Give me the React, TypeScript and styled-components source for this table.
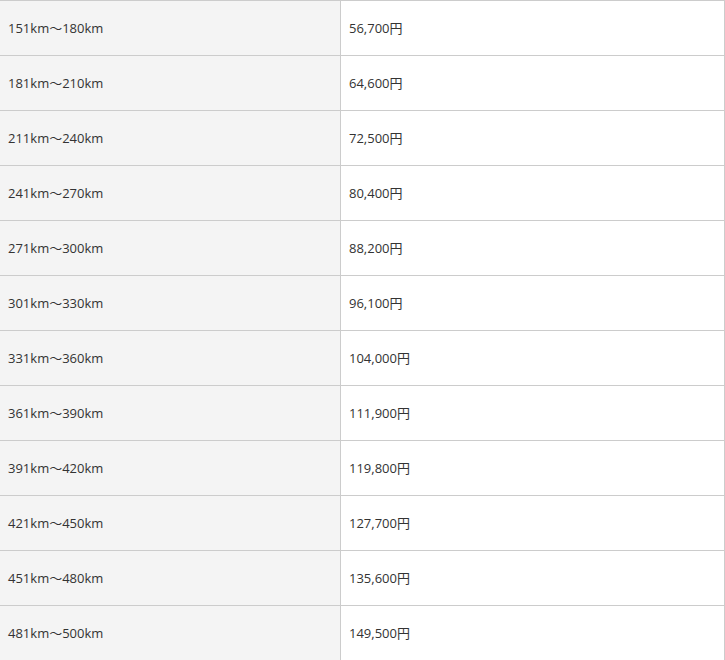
import React from "react";
import styled, { createGlobalStyle } from "styled-components";

const Global = createGlobalStyle`
  html, body { margin: 0; padding: 0; background: #fff; }
  body { font-family: "Open Sans", "Noto Sans CJK JP", sans-serif; color: #333; }
`;

const Table = styled.table`
  border-collapse: collapse;
  width: 726px;
  margin-left: -1px;
  table-layout: fixed;
  font-size: 13px;
`;

const Row = styled.tr`
  height: 55px;
`;

const Cell = styled.td<{ $label?: boolean }>`
  border: 1px solid #ccc;
  padding: 2px 8px 0;
  height: 54px;
  box-sizing: border-box;
  vertical-align: middle;
  background: ${(p) => (p.$label ? "#f4f4f4" : "#fff")};
  width: ${(p) => (p.$label ? "341px" : "auto")};
  line-height: 1.5;
`;

const rows: [string, string][] = [
  ["151km～180km", "56,700円"],
  ["181km～210km", "64,600円"],
  ["211km～240km", "72,500円"],
  ["241km～270km", "80,400円"],
  ["271km～300km", "88,200円"],
  ["301km～330km", "96,100円"],
  ["331km～360km", "104,000円"],
  ["361km～390km", "111,900円"],
  ["391km～420km", "119,800円"],
  ["421km～450km", "127,700円"],
  ["451km～480km", "135,600円"],
  ["481km～500km", "149,500円"],
];

export default function App() {
  return (
    <>
      <Global />
      <Table>
        <tbody>
          {rows.map(([d, p]) => (
            <Row key={d}>
              <Cell $label>{d}</Cell>
              <Cell>{p}</Cell>
            </Row>
          ))}
        </tbody>
      </Table>
    </>
  );
}
